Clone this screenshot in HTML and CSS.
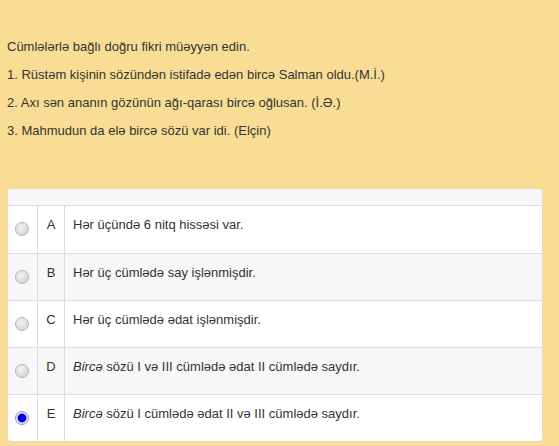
FILE: index.html
```html
<!DOCTYPE html>
<html>
<head>
<meta charset="utf-8">
<link rel="stylesheet" href="styles.css">
</head>
<body>
<div class="page">
  <div class="question">
    <p>Cümlələrlə bağlı doğru fikri müəyyən edin.</p>
    <p>1. Rüstəm kişinin sözündən istifadə edən bircə Salman oldu.(M.İ.)</p>
    <p>2. Axı sən ananın gözünün ağı-qarası bircə oğlusan. (İ.Ə.)</p>
    <p>3. Mahmudun da elə bircə sözü var idi. (Elçin)</p>
  </div>
  <div class="panel">
    <div class="panel-head"></div>
    <table class="answers">
      <tr>
        <td class="c-radio"><span class="radio"></span></td>
        <td class="c-letter">A</td>
        <td class="c-text">Hər üçündə 6 nitq hissəsi var.</td>
      </tr>
      <tr class="alt">
        <td class="c-radio"><span class="radio"></span></td>
        <td class="c-letter">B</td>
        <td class="c-text">Hər üç cümlədə say işlənmişdir.</td>
      </tr>
      <tr>
        <td class="c-radio"><span class="radio"></span></td>
        <td class="c-letter">C</td>
        <td class="c-text">Hər üç cümlədə ədat işlənmişdir.</td>
      </tr>
      <tr class="alt">
        <td class="c-radio"><span class="radio"></span></td>
        <td class="c-letter">D</td>
        <td class="c-text"><i>Bircə</i> sözü I və III cümlədə ədat II cümlədə saydır.</td>
      </tr>
      <tr>
        <td class="c-radio"><span class="radio checked"></span></td>
        <td class="c-letter">E</td>
        <td class="c-text"><i>Bircə</i> sözü I cümlədə ədat II və III cümlədə saydır.</td>
      </tr>
    </table>
  </div>
</div>
</body>
</html>
```
FILE: styles.css
```css
html, body {
  margin: 0;
  padding: 0;
  background: #f9dd95;
}
body {
  font-family: "Liberation Sans", Arial, sans-serif;
  font-size: 13px;
  color: #333;
  width: 559px;
  height: 446px;
  overflow: hidden;
}
.page {
  padding: 38px 0 0 7px;
}
.question p {
  margin: 0 0 10px 0;
  line-height: 18px;
}
.panel {
  margin-top: 48px;
  width: 534px;
  background: #fff;
  border: 1px solid #e6d9b8;
  border-radius: 4px;
  overflow: hidden;
}
.panel-head {
  height: 16px;
  background: #f7f7f7;
  border-bottom: 1px solid #dcdcdc;
}
.answers {
  width: 100%;
  border-collapse: collapse;
}
.answers tr {
  height: 47px;
}
.answers tr.alt {
  background: #f7f7f7;
}
.answers td {
  border-top: 1px solid #dcdcdc;
  vertical-align: top;
  padding: 10px 8px 0 8px;
  line-height: 18px;
}
.answers tr:first-child td {
  border-top: none;
}
.c-radio {
  width: 13px;
  border-right: 1px solid #dcdcdc;
}
.c-letter {
  width: 10px;
  text-align: center;
  border-right: 1px solid #dcdcdc;
}
.radio {
  display: block;
  width: 12px;
  height: 12px;
  margin-top: 6px;
  margin-left: -1px;
  border-radius: 50%;
  border: 1px solid #b4b4b4;
  background: radial-gradient(circle at 40% 35%, #f2f2f2 0%, #d9d9d9 70%, #cfcfcf 100%);
}
.radio.checked {
  border-color: #9a9ab8;
  background: radial-gradient(circle at 50% 50%, #0000ee 0%, #0000e0 45%, #e8e8f4 58%, #dcdce8 100%);
}
```
